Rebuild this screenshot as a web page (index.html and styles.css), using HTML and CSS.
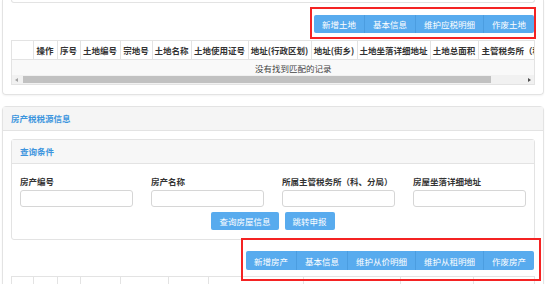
FILE: index.html
```html
<!DOCTYPE html>
<html lang="zh-CN">
<head>
    <meta charset="UTF-8">
    <title>税源信息</title>
    <link rel="stylesheet" href="styles.css">
</head>
<body>
    <div class="panel panel-cut">
        <div class="box-tail"></div>
        <div class="toolbar">
            <div class="btn-group">
                <span class="mark mark-1"></span>
                <button>新增土地</button>
                <button>基本信息</button>
                <button>维护应税明细</button>
                <button>作废土地</button>
            </div>
        </div>
        <div class="grid-wrap">
            <div class="grid-scroll">
                <table class="grid grid-land">
                    <colgroup>
                        <col style="width:21px"><col style="width:24px"><col style="width:23px">
                        <col style="width:40px"><col style="width:32px"><col style="width:39px">
                        <col style="width:57px"><col style="width:63px"><col style="width:46px">
                        <col style="width:73px"><col style="width:48px"><col style="width:110px">
                    </colgroup>
                    <tr>
                        <th></th><th>操作</th><th>序号</th><th>土地编号</th><th>宗地号</th><th>土地名称</th>
                        <th>土地使用证号</th><th>地址(行政区划)</th><th>地址(街乡)</th><th>土地坐落详细地址</th>
                        <th>土地总面积</th><th class="left">主管税务所（科、分局）</th>
                    </tr>
                    <tr class="empty-row">
                        <td colspan="12">没有找到匹配的记录</td>
                    </tr>
                </table>
            </div>
            <div class="scrollbar">
                <span class="arrow arrow-left"></span>
                <div class="track"><div class="thumb"></div></div>
                <span class="arrow arrow-right"></span>
            </div>
        </div>
    </div>

    <div class="panel">
        <div class="panel-heading">房产税税源信息</div>
        <div class="panel-body">
            <div class="box">
                <div class="box-heading">查询条件</div>
                <div class="box-body">
                    <div class="form-row">
                        <div class="form-group">
                            <label>房产编号</label>
                            <input type="text">
                        </div>
                        <div class="form-group">
                            <label>房产名称</label>
                            <input type="text">
                        </div>
                        <div class="form-group">
                            <label>所属主管税务所（科、分局）</label>
                            <input type="text">
                        </div>
                        <div class="form-group">
                            <label>房屋坐落详细地址</label>
                            <input type="text">
                        </div>
                    </div>
                    <div class="form-actions">
                        <button class="btn">查询房屋信息</button>
                        <button class="btn">跳转申报</button>
                    </div>
                </div>
            </div>
            <div class="toolbar toolbar-2">
                <div class="btn-group">
                    <span class="mark mark-2"></span>
                    <button>新增房产</button>
                    <button>基本信息</button>
                    <button>维护从价明细</button>
                    <button>维护从租明细</button>
                    <button>作废房产</button>
                </div>
            </div>
            <div class="grid-wrap grid-wrap-2">
                <div class="grid-scroll">
                    <table class="grid grid-house">
                        <colgroup>
                            <col style="width:21px"><col style="width:24px"><col style="width:23px">
                            <col style="width:40px"><col style="width:48px"><col style="width:40px">
                            <col style="width:95px"><col style="width:97px"><col style="width:73px">
                            <col style="width:80px">
                        </colgroup>
                        <tr>
                            <th></th><th></th><th></th><th></th><th></th>
                            <th></th><th></th><th></th><th></th><th></th>
                        </tr>
                    </table>
                </div>
            </div>
        </div>
    </div>
</body>
</html>
```

FILE: styles.css
```css
body {
    margin: 0;
    padding: 0 10px 0 2px;
    font-family: "Noto Sans CJK SC", "Noto Sans", sans-serif;
    font-size: 8.5px;
    color: #333;
    background-color: #fff;
}
.panel {
    border: 1px solid #e3e3e3;
    border-radius: 4px;
    box-shadow: 0 1px 2px rgba(0,0,0,0.05);
    margin-bottom: 11px;
}
.panel-cut {
    border-top: none;
    border-top-left-radius: 0;
    border-top-right-radius: 0;
    padding: 0 8px 9px 8px;
}
.box-tail {
    height: 2px;
    border: 1px solid #e3e3e3;
    border-top: none;
    border-radius: 0 0 3px 3px;
}
.toolbar {
    display: flex;
    justify-content: flex-end;
    margin-top: 12px;
    padding-right: 1px;
}
.btn-group {
    position: relative;
    display: flex;
}
.btn-group button {
    height: 18px;
    padding: 0 8px;
    border: none;
    border-left: 1px solid #4b9de0;
    background-color: #58abee;
    color: #fff;
    font-family: inherit;
    font-size: 8.5px;
    white-space: nowrap;
}
.btn-group button:first-of-type {
    border-left: none;
    border-radius: 2px 0 0 2px;
}
.btn-group button:last-of-type {
    border-radius: 0 2px 2px 0;
}
.mark {
    position: absolute;
    border: 2px solid #f42323;
    pointer-events: none;
}
.mark-1 {
    left: -4px;
    right: -2px;
    top: -8px;
    bottom: -6px;
}
.mark-2 {
    left: -5px;
    right: -7px;
    top: -13px;
    bottom: -11px;
}
.grid-wrap {
    margin-top: 7px;
    border: 1px solid #e3e3e3;
}
.grid-scroll {
    overflow: hidden;
}
.grid {
    border-collapse: collapse;
    table-layout: fixed;
}
.grid-land {
    width: 576px;
}
.grid-house {
    width: 541px;
}
.grid th {
    height: 18px;
    padding: 0;
    border-left: 1px solid #e3e3e3;
    border-bottom: 1px solid #e3e3e3;
    font-weight: bold;
    white-space: nowrap;
    overflow: hidden;
    color: #333;
}
.grid th:first-child {
    border-left: none;
}
.grid th.left {
    text-align: left;
    padding-left: 3px;
}
.empty-row td {
    height: 15px;
    padding: 0 0 0 243px;
    background-color: #f9f9f9;
    color: #444;
    white-space: nowrap;
}
.scrollbar {
    display: flex;
    align-items: center;
    height: 9px;
    background-color: #f1f1f1;
}
.arrow {
    width: 0;
    height: 0;
    border-top: 2px solid transparent;
    border-bottom: 2px solid transparent;
    margin: 0 3px;
}
.arrow-left {
    border-right: 3px solid #a3a3a3;
}
.arrow-right {
    border-left: 3px solid #505050;
}
.track {
    flex: 1;
    height: 7px;
}
.thumb {
    width: 468px;
    height: 7px;
    margin-left: 2px;
    background-color: #c1c1c1;
}
.panel-heading {
    height: 23px;
    line-height: 23px;
    padding-left: 8px;
    background-color: #f5f5f5;
    border-bottom: 1px solid #e3e3e3;
    color: #3d95de;
    font-weight: bold;
}
.panel-body {
    padding: 8px 8px 0 8px;
}
.box {
    border: 1px solid #e3e3e3;
    border-radius: 3px;
}
.box-heading {
    height: 23px;
    line-height: 23px;
    padding-left: 8px;
    background-color: #f7f7f7;
    border-bottom: 1px solid #e3e3e3;
    color: #3d95de;
    font-weight: bold;
}
.box-body {
    padding: 11px 8px 9px 8px;
}
.form-row {
    display: grid;
    grid-template-columns: repeat(4, 113px);
    column-gap: 18px;
}
.form-group label {
    display: block;
    height: 15px;
    line-height: 12px;
    font-weight: bold;
    color: #333;
}
.form-group input {
    display: block;
    box-sizing: border-box;
    width: 113px;
    height: 17px;
    border: 1px solid #d6d6d6;
    border-radius: 3px;
    margin: 0;
}
.form-actions {
    display: flex;
    justify-content: center;
    gap: 6px;
    margin-top: 5px;
}
.btn {
    height: 18px;
    padding: 0 8px;
    border: none;
    border-radius: 2px;
    background-color: #58abee;
    color: #fff;
    font-family: inherit;
    font-size: 8.5px;
}
.toolbar-2 {
    margin-top: 11px;
}
.toolbar-2 .btn-group button {
    height: 19px;
}
.grid-wrap-2 {
    margin-top: 6px;
    border-bottom: none;
}
```
